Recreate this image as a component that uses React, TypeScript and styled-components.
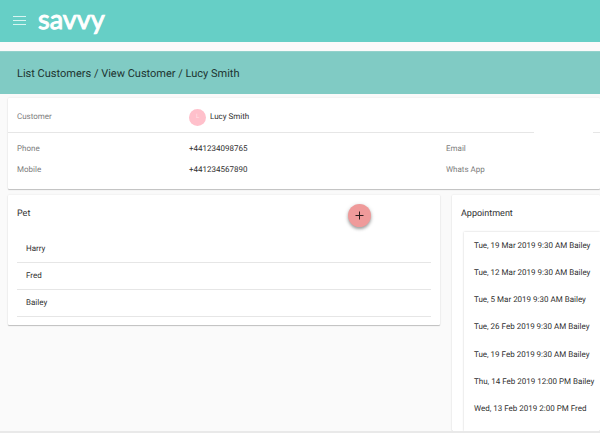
import React from "react";
import styled, { createGlobalStyle } from "styled-components";

const GlobalStyle = createGlobalStyle`
  * { box-sizing: border-box; }
  body {
    margin: 0;
    background: #fafafa;
    color: #303030;
    font-family: Roboto, "Liberation Sans", sans-serif;
    font-size: 8px;
    line-height: 12px;
    text-rendering: geometricPrecision;
  }
  h1, h2, ul, dl, dd { margin: 0; padding: 0; font-weight: 400; }
  ul { list-style: none; }
`;

const Page = styled.div`
  display: flex;
  flex-direction: column;
  min-height: 100vh;
  border-bottom: 2px solid #e9e9e9;
  overflow: hidden;
`;

const TopBar = styled.header`
  display: flex;
  align-items: center;
  gap: 12px;
  height: 42px;
  padding: 0 13px 2px;
  background: #66cfc6;
`;

const MenuButton = styled.button`
  display: flex;
  padding: 0;
  border: 0;
  background: none;
  color: #d8f5f1;
  cursor: pointer;
`;

const Logo = styled.a`
  padding-bottom: 3px;
  color: #fff;
  font-family: Lato, sans-serif;
  font-size: 27px;
  font-weight: 400;
  line-height: 32px;
  text-decoration: none;
  -webkit-text-stroke: 1px #fff;
  stroke-linejoin: round;
`;

const Breadcrumb = styled.h1`
  margin-top: 9px;
  padding: 14px 17px 12px;
  background: #80cbc4;
  border-top: 1px solid #93d1cb;
  color: #1d3431;
  font-size: 11px;
  line-height: 16px;
`;

const Main = styled.main`
  display: flex;
  flex: 1;
  flex-direction: column;
  gap: 6px;
  padding: 4px 0 0 8px;
`;

const Card = styled.section`
  background: #fff;
  border-radius: 1px;
  box-shadow: 0 1px 1px rgba(0, 0, 0, 0.22), 0 0 2px rgba(0, 0, 0, 0.1);
`;

const CustomerCard = styled(Card)`
  padding: 4px 0 9px;
`;

const Row = styled.dl<{ $tall?: boolean }>`
  display: grid;
  grid-template-columns: 172fr 257fr 154fr;
  align-items: center;
  height: ${(p) => (p.$tall ? 30 : 21)}px;
  padding-left: 9px;
`;

const Details = styled.div`
  padding-top: 5px;
`;

const Label = styled.dt`
  color: #7d7d7d;
`;

const Value = styled.dd`
  display: flex;
  align-items: center;
  gap: 4px;
`;

const Avatar = styled.span`
  display: flex;
  align-items: center;
  justify-content: center;
  width: 17px;
  height: 17px;
  border-radius: 50%;
  background: #ffc0cb;
  color: #ffe0e6;
  font-size: 6px;
`;

const Rule = styled.div`
  display: grid;
  grid-template-columns: 526fr 7fr;
  column-gap: 10%;

  &::before,
  &::after {
    content: "";
    height: 1px;
    background: #e6e6e6;
  }
`;

const Columns = styled.div`
  display: grid;
  flex: 1;
  grid-template-columns: 432fr 148fr;
  gap: 12px;
`;

const PetCard = styled(Card)`
  align-self: start;
  padding: 9px 9px 8px;
`;

const PetHeader = styled.div`
  display: flex;
  align-items: flex-start;
  justify-content: space-between;
  height: 32px;
  padding-right: 60px;
`;

const Heading = styled.h2`
  font-size: 9px;
  line-height: 12px;
`;

const PetHeading = styled(Heading)`
  padding-top: 4px;
`;

const AddButton = styled.button`
  display: flex;
  flex: none;
  align-items: center;
  justify-content: center;
  width: 23px;
  height: 23px;
  padding: 0;
  border: 0;
  border-radius: 50%;
  background: #ef9a9a;
  color: #2c1c1c;
  box-shadow: 0 2px 3px rgba(0, 0, 0, 0.3), 0 1px 5px rgba(0, 0, 0, 0.14);
  cursor: pointer;
`;

const PetItem = styled.li`
  display: flex;
  align-items: center;
  height: 27px;
  padding-left: 9px;
  border-bottom: 1px solid #e6e6e6;
`;

const AppointmentCard = styled(Card)`
  display: flex;
  flex-direction: column;
  gap: 12px;
  padding: 13px 0 0 9px;
`;

const AppointmentList = styled.ul`
  display: flex;
  flex: 1;
  flex-direction: column;
  margin-left: 3px;
  padding: 0 0 8px 10px;
  box-shadow: 0 0 2px rgba(0, 0, 0, 0.2);
`;

const AppointmentItem = styled.li`
  display: flex;
  flex: 1;
  align-items: center;
  white-space: nowrap;
`;

const pets = ["Harry", "Fred", "Bailey"];

const appointments = [
  "Tue, 19 Mar 2019 9:30 AM Bailey",
  "Tue, 12 Mar 2019 9:30 AM Bailey",
  "Tue, 5 Mar 2019 9:30 AM Bailey",
  "Tue, 26 Feb 2019 9:30 AM Bailey",
  "Tue, 19 Feb 2019 9:30 AM Bailey",
  "Thu, 14 Feb 2019 12:00 PM Bailey",
  "Wed, 13 Feb 2019 2:00 PM Fred",
];

export default function App() {
  return (
    <>
      <GlobalStyle />
      <Page>
        <TopBar>
          <MenuButton aria-label="Menu">
            <svg width="13" height="10" viewBox="0 0 13 10" stroke="currentColor">
              <path d="M0 1.5H13M0 5.5H13M0 9.5H13" />
            </svg>
          </MenuButton>
          <Logo href="#">savvy</Logo>
        </TopBar>
        <Breadcrumb>List Customers / View Customer / Lucy Smith</Breadcrumb>
        <Main>
          <CustomerCard>
            <Row $tall>
              <Label>Customer</Label>
              <Value>
                <Avatar>L</Avatar>
                Lucy Smith
              </Value>
            </Row>
            <Rule />
            <Details>
              <Row>
                <Label>Phone</Label>
                <Value>+441234098765</Value>
                <Label>Email</Label>
              </Row>
              <Row>
                <Label>Mobile</Label>
                <Value>+441234567890</Value>
                <Label>Whats App</Label>
              </Row>
            </Details>
          </CustomerCard>
          <Columns>
            <PetCard>
              <PetHeader>
                <PetHeading>Pet</PetHeading>
                <AddButton aria-label="Add pet">
                  <svg width="9" height="9" viewBox="0 0 9 9" stroke="currentColor">
                    <path d="M4.5 0.5V8.5M0.5 4.5H8.5" />
                  </svg>
                </AddButton>
              </PetHeader>
              <ul>
                {pets.map((name) => (
                  <PetItem key={name}>{name}</PetItem>
                ))}
              </ul>
            </PetCard>
            <AppointmentCard>
              <Heading>Appointment</Heading>
              <AppointmentList>
                {appointments.map((text) => (
                  <AppointmentItem key={text}>{text}</AppointmentItem>
                ))}
              </AppointmentList>
            </AppointmentCard>
          </Columns>
        </Main>
      </Page>
    </>
  );
}
